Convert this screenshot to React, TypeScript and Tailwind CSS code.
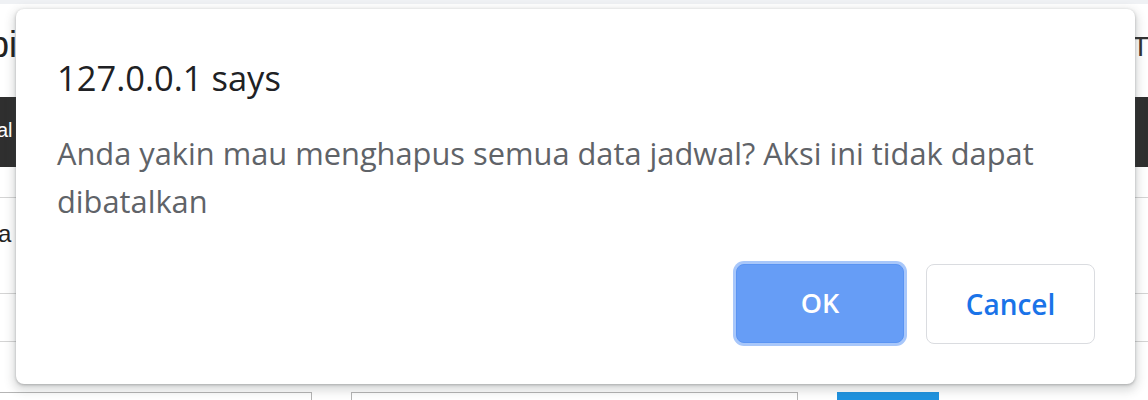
import React from "react";

export default function App() {
  return (
    <div className="relative w-[1148px] h-[400px] overflow-hidden bg-white font-['Liberation_Sans',Arial,sans-serif]">
      {/* background page */}
      <div className="h-[4px] bg-[#eff1f4]" />
      <div className="h-[93px] flex">
        <span className="ml-[-11px] mt-[21px] text-[36px] leading-[40px] text-[#222] h-[40px]">bi</span>
        <div className="flex-1" />
        <span className="mr-[-1px] mt-[27px] text-[28px] leading-[32px] text-[#333] h-[32px]">T</span>
      </div>
      <div className="h-[70px] bg-[#2f2f2f] text-white text-[20px] leading-[24px] pt-[21px]">
        <span className="ml-[-3px] block">al</span>
      </div>
      <div className="h-[31px] border-b border-[#d4d4d4]" />
      <div className="h-[96px] border-b border-[#d4d4d4] pt-[22px] text-[24px] leading-[28px] text-[#222]">
        <span className="ml-[-2px] block">a</span>
      </div>
      <div className="h-[48px] border-b border-[#d4d4d4]" />
      <div className="h-[50px]" />
      <div className="flex">
        <div className="w-[313px] h-[40px] border border-[#b5b5b5] ml-[-1px]" />
        <div className="w-[447px] h-[40px] border border-[#b5b5b5] ml-[39px]" />
        <div className="w-[102px] h-[40px] bg-[#1f93e0] ml-[39px]" />
      </div>

      {/* alert dialog overlay */}
      <div className="absolute left-[16px] top-[9px] w-[1119px] h-[375px] rounded-[8px] bg-white shadow-[0_1px_3px_0_rgba(60,64,67,0.35),0_4px_10px_3px_rgba(60,64,67,0.18)] flex flex-col pl-[41px] pr-[40px] pt-[49px] pb-[40px] font-['Open_Sans',sans-serif]">
        <div className="text-[34.5px] leading-[40px] text-[#202124]">127.0.0.1 says</div>
        <div className="mt-[31px] text-[30.8px] leading-[48px] text-[#5f6368]">
          Anda yakin mau menghapus semua data jadwal? Aksi ini tidak dapat
          <br />
          dibatalkan
        </div>
        <div className="mt-auto flex justify-end gap-[22px]">
          <button className="w-[168px] h-[79px] rounded-[8px] bg-[#669df6] border border-[#5a94f3] shadow-[0_0_0_3px_#a8c7fa] text-white text-[27px] font-semibold">
            OK
          </button>
          <button className="w-[169px] h-[80px] rounded-[8px] bg-white border border-[#dadce0] text-[#1a73e8] text-[28px] font-semibold">
            Cancel
          </button>
        </div>
      </div>
    </div>
  );
}
